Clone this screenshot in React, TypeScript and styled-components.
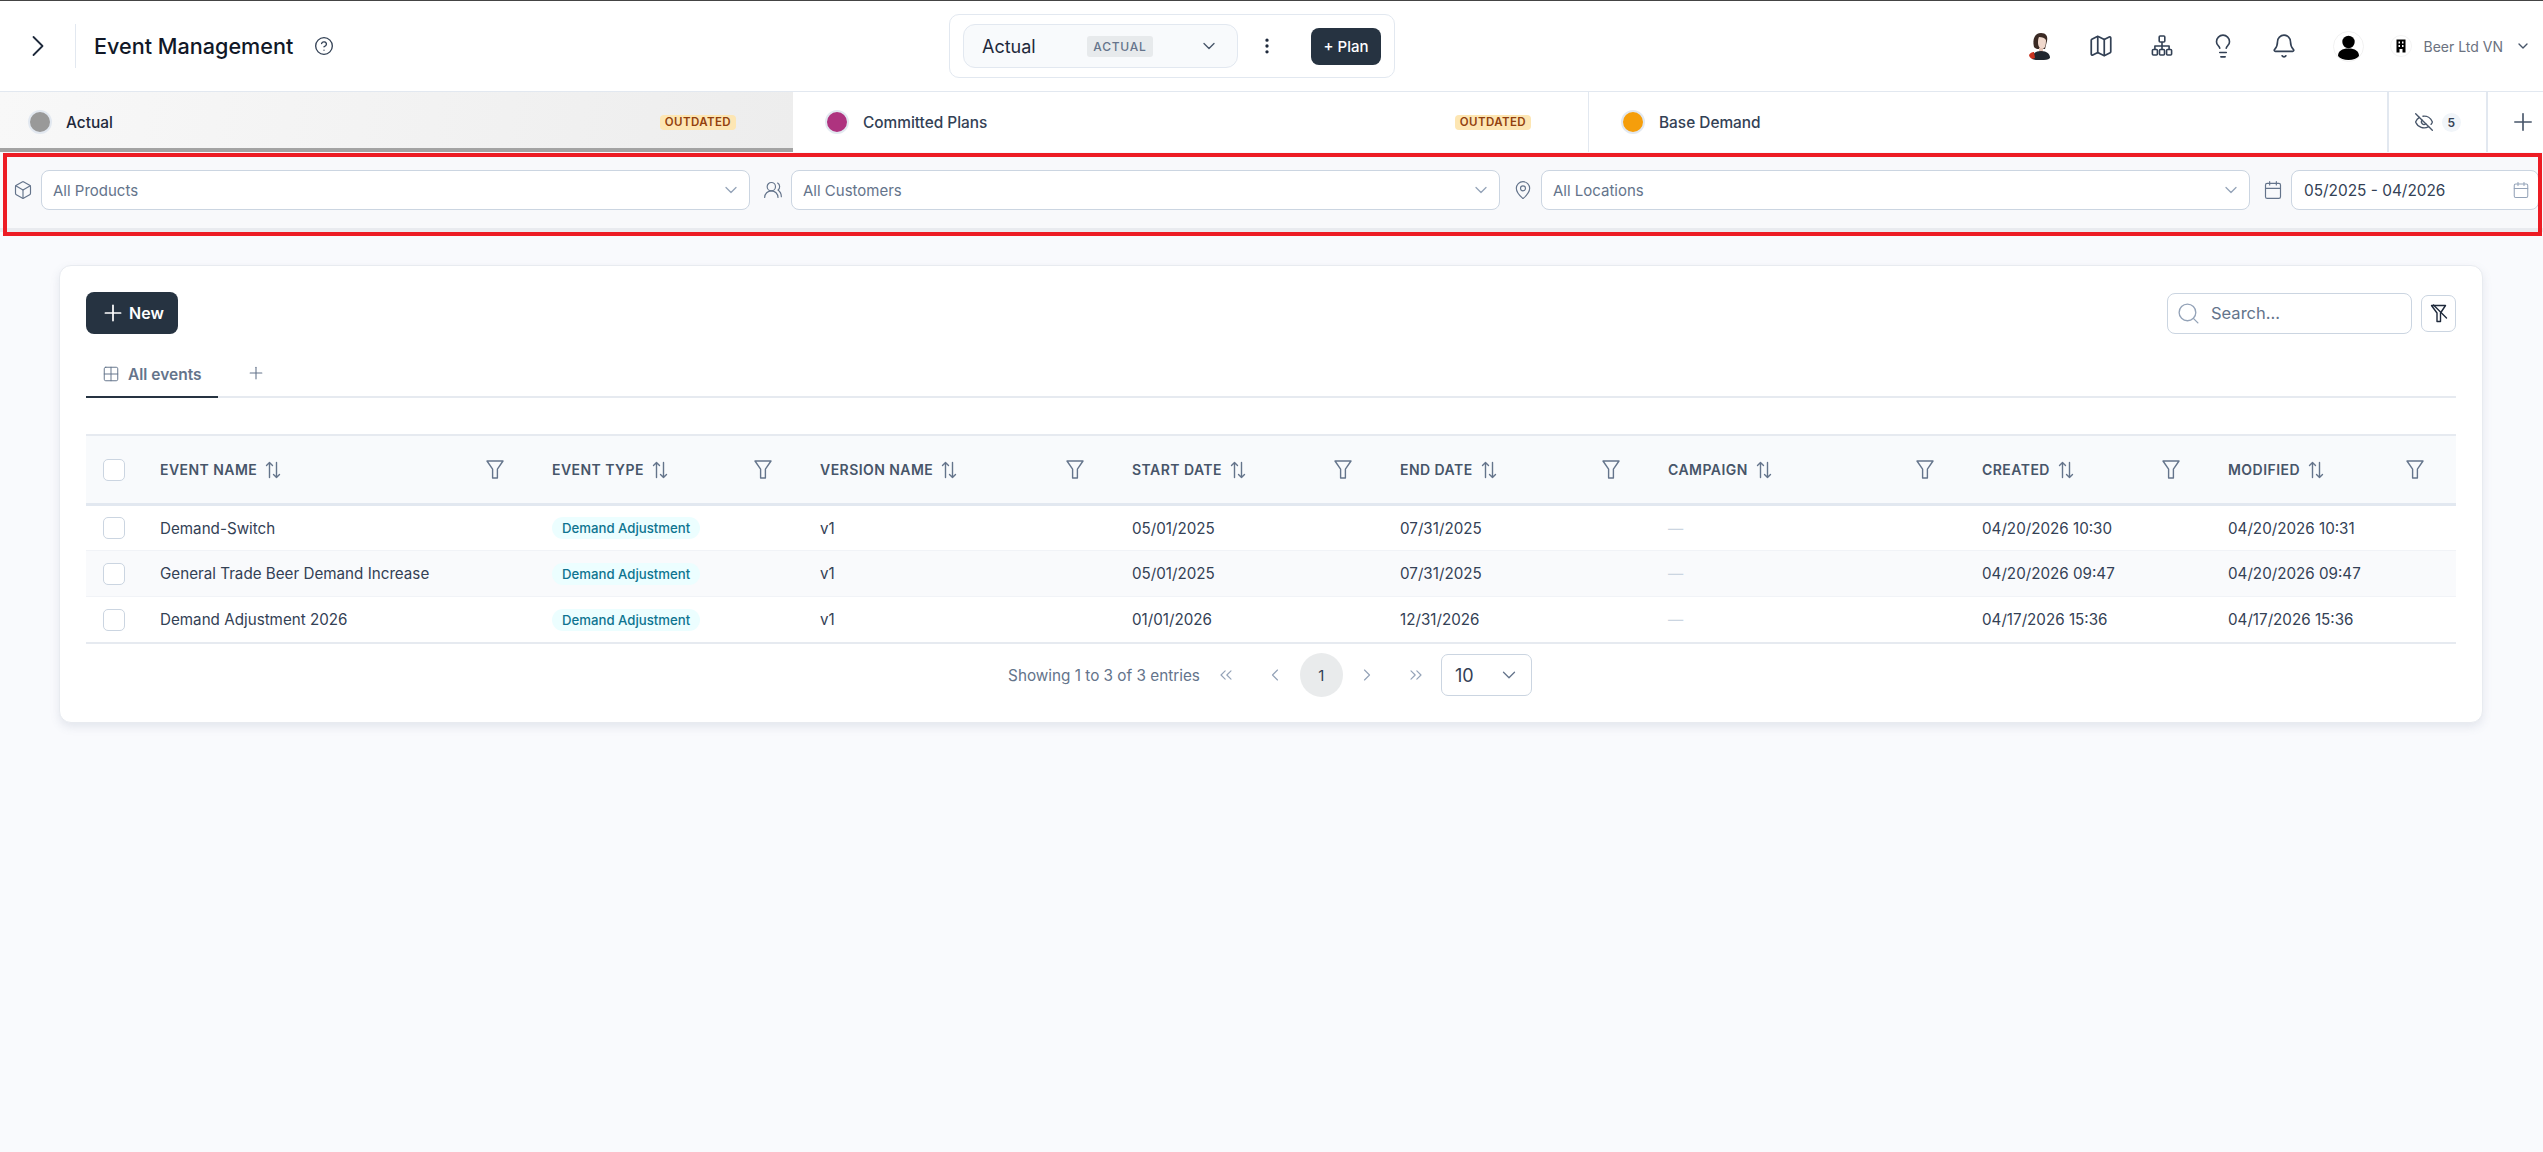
import React from 'react';
import styled, { createGlobalStyle } from 'styled-components';
import {
  Bell,
  Box,
  Calendar,
  ChevronDown,
  ChevronLeft,
  ChevronRight,
  ChevronsLeft,
  ChevronsRight,
  CircleHelp,
  EllipsisVertical,
  EyeOff,
  Grid2x2,
  Lightbulb,
  Map as MapIcon,
  MapPin,
  Plus,
  Search,
  UsersRound,
} from 'lucide-react';

const GlobalStyle = createGlobalStyle`
  html, body {
    margin: 0;
    padding: 0;
    background: #f9fafd;
    font-family: 'Inter', 'Liberation Sans', sans-serif;
    color: #1e293b;
  }
  * { box-sizing: border-box; }
`;

const Page = styled.div`
  position: relative;
  width: 2543px;
  height: 1152px;
  overflow: hidden;
  background: #f9fafd;
`;

const TopBar = styled.header`
  height: 92px;
  display: grid;
  grid-template-columns: 949px auto 1fr;
  align-items: center;
  background: #fff;
  border-top: 1px solid #444;
  border-bottom: 1px solid #e2e8f0;
`;

const TitleArea = styled.div`
  display: flex;
  align-items: center;
  height: 44px;
`;

const ToggleButton = styled.div`
  width: 76px;
  height: 44px;
  display: flex;
  align-items: center;
  justify-content: center;
  border-right: 1px solid #e2e8f0;
  color: #1e293b;
`;

const PageTitle = styled.h1`
  margin: 0 0 0 18px;
  font-size: 21.6px;
  font-weight: 500;
  color: #111827;
`;

const HelpIcon = styled(CircleHelp)`
  margin-left: 21px;
  color: #334155;
`;

const PlanBox = styled.div`
  width: 446px;
  height: 64px;
  display: flex;
  align-items: center;
  padding: 0 13px;
  background: #fff;
  border: 1px solid #e2e8f0;
  border-radius: 10px;
`;

const PlanSelect = styled.div`
  width: 275px;
  height: 44px;
  display: flex;
  align-items: center;
  padding: 0 18px;
  background: #f8fafc;
  border: 1px solid #e2e8f0;
  border-radius: 12px;
  font-size: 18px;
  color: #1e293b;
`;

const PlanName = styled.span`
  width: 105px;
`;

const PlanTag = styled.span`
  width: 66px;
  height: 21px;
  display: flex;
  align-items: center;
  justify-content: center;
  background: #e7eaec;
  border-radius: 3px;
  font-size: 12px;
  font-weight: 500;
  letter-spacing: 0.8px;
  color: #64748b;
`;

const PlanChevron = styled(ChevronDown)`
  margin-left: auto;
  color: #475569;
`;

const KebabIcon = styled(EllipsisVertical)`
  margin-left: 19px;
  color: #1e293b;
`;

const PlanButton = styled.button`
  margin-left: auto;
  width: 70px;
  height: 37px;
  padding: 0;
  border: 0;
  border-radius: 8px;
  background: #263341;
  color: #fff;
  font-family: inherit;
  font-size: 15px;
  font-weight: 500;
`;

const ActionArea = styled.div`
  display: flex;
  align-items: center;
  justify-content: flex-end;
  padding-right: 12px;
`;

const ActionSlot = styled.div<{ $nudge?: number }>`
  width: 61px;
  margin-left: ${(p) => p.$nudge ?? 0}px;
  display: flex;
  justify-content: center;
  color: #334155;
`;

const LogoSlot = styled.div`
  margin-left: 11px;
  display: flex;
`;

const CompanyName = styled.span`
  margin-left: 12px;
  font-size: 14px;
  color: #6b7280;
`;

const CompanyChevron = styled(ChevronDown)`
  margin-left: 12px;
  color: #475569;
`;

const TabBar = styled.nav`
  height: 60px;
  display: grid;
  grid-template-columns: 793px 796px 797.5px 99.5px 1fr;
  background: #fff;
`;

const PlanTab = styled.div<{ $active?: boolean; $divider?: boolean }>`
  display: flex;
  align-items: center;
  padding: ${(p) => (p.$active ? '4px 57px 0 28px' : '0 57px 0 32px')};
  background: ${(p) => (p.$active ? 'linear-gradient(100deg, #f8f8f8, #ededed)' : '#fff')};
  border-bottom: ${(p) => (p.$active ? '4px solid #a3a3a3' : '0')};
  border-right: ${(p) => (p.$divider ? '1px solid #e2e8f0' : '0')};
`;

const PlanDot = styled.span<{ $color: string }>`
  width: 24px;
  height: 24px;
  flex: none;
  background: ${(p) => p.$color};
  border: 2px solid #e2e8f0;
  border-radius: 50%;
`;

const TabLabel = styled.span<{ $active?: boolean }>`
  margin-left: 14px;
  font-size: 15.4px;
  font-weight: 500;
  color: ${(p) => (p.$active ? '#1e293b' : '#334155')};
`;

const OutdatedBadge = styled.span`
  margin-left: auto;
  height: 15px;
  padding: 0 5px;
  display: flex;
  align-items: center;
  background: #fde6b3;
  border-radius: 4px;
  font-size: 11.5px;
  font-weight: 600;
  letter-spacing: 0.4px;
  color: #92400e;
`;

const IconTab = styled.div<{ $inset?: number }>`
  display: flex;
  align-items: center;
  justify-content: center;
  gap: 8px;
  padding-left: ${(p) => p.$inset ?? 0}px;
  border-left: 2px solid #e2e8f0;
  color: #475569;
`;

const CountBubble = styled.span`
  width: 19px;
  height: 19px;
  display: flex;
  align-items: center;
  justify-content: center;
  background: #f1f5f9;
  border-radius: 50%;
  font-size: 12px;
  font-weight: 600;
  color: #334155;
`;

const FilterBar = styled.section`
  height: 80px;
  display: grid;
  grid-template-columns: 1fr 1fr 1fr 276px;
  gap: 13px;
  align-items: center;
  padding: 0 4px 0 13px;
  background: #f8f9fb;
  border-bottom: 4px solid #e9ebef;
`;

const FilterGroup = styled.div`
  display: flex;
  align-items: center;
  gap: 8px;
  color: #64748b;
`;

const FilterField = styled.div`
  flex: 1;
  height: 40px;
  display: flex;
  align-items: center;
  justify-content: space-between;
  padding: 0 8px 0 11px;
  background: #fff;
  border: 1px solid #cbd5e1;
  border-radius: 8px;
  font-size: 15px;
  color: #64748b;
`;

const DateValue = styled.span`
  margin-left: 1px;
  font-size: 15.4px;
  color: #334155;
`;

const Highlight = styled.div`
  position: absolute;
  left: 3px;
  right: 1px;
  top: 153px;
  height: 83px;
  border: 4px solid #ed1c24;
  pointer-events: none;
`;

const Main = styled.main`
  padding: 33px 60px 0 59px;
`;

const Card = styled.section`
  height: 458px;
  padding: 26px 26px 0;
  background: #fff;
  border: 1px solid #e8ebf0;
  border-radius: 12px;
  box-shadow: 0 4px 10px rgba(100, 116, 139, 0.14);
`;

const CardHead = styled.div`
  display: flex;
  align-items: center;
  height: 42px;
`;

const NewButton = styled.button`
  width: 92px;
  height: 42px;
  display: flex;
  align-items: center;
  justify-content: center;
  gap: 3px;
  padding: 0;
  border: 0;
  border-radius: 8px;
  background: #263341;
  color: #fff;
  font-family: inherit;
  font-size: 16px;
  font-weight: 600;
`;

const SearchBox = styled.div`
  margin-left: auto;
  width: 245px;
  height: 41px;
  display: flex;
  align-items: center;
  gap: 10px;
  padding: 0 8px;
  border: 1px solid #cbd5e1;
  border-radius: 8px;
  font-size: 16.5px;
  color: #64748b;
`;

const SearchIcon = styled(Search)`
  color: #94a3b8;
`;

const ClearFilterButton = styled.div`
  margin-left: 9px;
  width: 35px;
  height: 37px;
  display: flex;
  align-items: center;
  justify-content: center;
  border: 1px solid #cbd5e1;
  border-radius: 7px;
  color: #1e293b;
`;

const ViewTabs = styled.div`
  height: 65px;
  margin-top: -1px;
  display: flex;
  align-items: flex-end;
  border-bottom: 2px solid #e6eaf0;
`;

const ViewTab = styled.div`
  width: 132px;
  height: 43px;
  margin-bottom: -2px;
  display: flex;
  align-items: flex-start;
  gap: 8px;
  padding: 10px 0 0 16px;
  border-bottom: 2px solid #263341;
  font-size: 15.5px;
  font-weight: 600;
  color: #64748b;
`;

const AddViewIcon = styled(Plus)`
  margin: 0 0 13px 28px;
  color: #64748b;
`;

const gridColumns = '58px 392px 268px 312px 268px 268px 314px 246px 244px';

const TableHead = styled.div`
  margin-top: 36px;
  height: 72px;
  display: grid;
  grid-template-columns: ${gridColumns};
  align-items: center;
  background: #f8fafc;
  border-top: 2px solid #e6eaf0;
  border-bottom: 3px solid #e2e8f0;
`;

const HeadCell = styled.div`
  display: flex;
  align-items: center;
  padding: 0 32px 0 16px;
  font-size: 14px;
  font-weight: 600;
  letter-spacing: 0.45px;
  color: #475569;
`;

const SortGlyph = styled.svg`
  margin-left: 8px;
  color: #64748b;
`;

const FilterGlyph = styled.svg`
  margin-left: auto;
  color: #64748b;
`;

const CheckCell = styled.div`
  display: flex;
  justify-content: center;
  padding-right: 2px;
`;

const CheckBox = styled.span`
  width: 22px;
  height: 22px;
  background: #fff;
  border: 1px solid #cbd5e1;
  border-radius: 5px;
`;

const Row = styled.div<{ $height: number; $striped?: boolean; $last?: boolean }>`
  height: ${(p) => p.$height}px;
  display: grid;
  grid-template-columns: ${gridColumns};
  align-items: center;
  background: ${(p) => (p.$striped ? '#f9fafc' : '#fff')};
  border-bottom: ${(p) => (p.$last ? '2px solid #e6eaf0' : '1px solid #f1f3f7')};
`;

const Cell = styled.div`
  padding-left: 16px;
  font-size: 15.2px;
  color: #334155;
`;

const EmptyDash = styled.span`
  color: #cbd5e1;
`;

const TypeBadge = styled.span`
  display: inline-flex;
  align-items: center;
  height: 22px;
  padding: 0 10px;
  background: #ecfeff;
  border-radius: 11px;
  font-size: 13.2px;
  font-weight: 500;
  color: #0e7490;
`;

const Pager = styled.div`
  height: 62px;
  display: flex;
  align-items: center;
  justify-content: center;
  padding-right: 2px;
  color: #94a3b8;
`;

const PagerText = styled.span`
  margin-right: 2px;
  font-size: 15.3px;
  color: #64748b;
`;

const PagerArrow = styled.span`
  width: 49px;
  display: flex;
  justify-content: center;
`;

const PagerCurrent = styled.span`
  width: 43px;
  height: 44px;
  display: flex;
  align-items: center;
  justify-content: center;
  background: #e9ebec;
  border-radius: 50%;
  font-size: 15px;
  color: #334155;
`;

const PageSize = styled.div`
  width: 91px;
  height: 42px;
  display: flex;
  align-items: center;
  justify-content: space-between;
  padding: 0 11px 0 13px;
  background: #fff;
  border: 1px solid #cbd5e1;
  border-radius: 7px;
  font-size: 18px;
  color: #334155;
`;

const PageSizeChevron = styled(ChevronDown)`
  color: #64748b;
`;

const columns = ['EVENT NAME', 'EVENT TYPE', 'VERSION NAME', 'START DATE', 'END DATE', 'CAMPAIGN', 'CREATED', 'MODIFIED'];

const rowHeights = [45, 46, 47];

const events = [
  { name: 'Demand-Switch', start: '05/01/2025', end: '07/31/2025', created: '04/20/2026 10:30', modified: '04/20/2026 10:31' },
  { name: 'General Trade Beer Demand Increase', start: '05/01/2025', end: '07/31/2025', created: '04/20/2026 09:47', modified: '04/20/2026 09:47' },
  { name: 'Demand Adjustment 2026', start: '01/01/2026', end: '12/31/2026', created: '04/17/2026 15:36', modified: '04/17/2026 15:36' },
];

const SortIcon = () => (
  <SortGlyph width="16" height="20" viewBox="0 0 16 20" fill="none" stroke="currentColor" strokeWidth="1.4" strokeLinecap="round" strokeLinejoin="round">
    <path d="M4.5 17.5V2.5M1.5 5.5l3-3 3 3" />
    <path d="M11.5 2.5v15M8.5 14.5l3 3 3-3" />
  </SortGlyph>
);

const FunnelIcon = () => (
  <FilterGlyph width="18" height="19" viewBox="0 0 18 19" fill="none" stroke="currentColor" strokeWidth="1.4" strokeLinejoin="round">
    <path d="M1 1h16l-5.6 8.2v8.8H6.6V9.2L1 1z" />
  </FilterGlyph>
);

const FunnelSlashIcon = () => (
  <svg width="18" height="19" viewBox="0 0 18 19" fill="none" stroke="currentColor" strokeWidth="1.4" strokeLinejoin="round">
    <path d="M1.5 1.5h14l-5 7.5v8.5H7V9L1.5 1.5z" />
    <path d="M3.5 1l13 13" strokeLinecap="round" />
  </svg>
);

const SitemapIcon = () => (
  <svg width="22" height="24" viewBox="0 0 22 24" fill="none" stroke="currentColor" strokeWidth="1.6" strokeLinejoin="round">
    <rect x="8.2" y="2" width="5.6" height="6" rx="1" />
    <rect x="1.4" y="15.5" width="5" height="5.5" rx="1" />
    <rect x="8.5" y="15.5" width="5" height="5.5" rx="1" />
    <rect x="15.6" y="15.5" width="5" height="5.5" rx="1" />
    <path d="M11 8v7.5M3.9 15.5V12h14.2v3.5" />
  </svg>
);

// small cartoon portrait next to the toolbar icons
const PortraitIcon = () => (
  <svg width="22" height="28" viewBox="0 0 22 28">
    <path d="M5 15C3 7 6 1 12 1c5 0 7 3 6 8l-2 8H8l-2-1z" fill="#3a2a24" />
    <path d="M10 5c3 0 6 1 7 3 0 5-1 9-4 9-2 0-4-3-4-6 0-2 0-4 1-6z" fill="#f0d8cc" />
    <path d="M10 16h4v4h-4z" fill="#e4c4b6" />
    <path d="M3 27c0-5 3-8 9-8s9 3 9 7c-2 2-5 2-9 2s-7 0-9-1z" fill="#20262e" />
    <path d="M0 23c1-2 3-3 5-3l1 6-3 1c-1-1-3-2-3-4z" fill="#c8321f" />
  </svg>
);

const UserAvatar = () => (
  <svg width="31" height="31" viewBox="0 0 31 31">
    <circle cx="15.5" cy="15.5" r="15" fill="#fff" stroke="#f1f1f1" />
    <circle cx="15.5" cy="11" r="6.2" fill="#000" />
    <path d="M5 25c0-5 4-7.5 10.5-7.5S26 20 26 25c-2 2.5-6 4-10.5 4S7 27.5 5 25z" fill="#000" />
  </svg>
);

const CompanyLogo = () => (
  <svg width="22" height="22" viewBox="0 0 22 22">
    <circle cx="11" cy="11" r="10.5" fill="#fff" stroke="#f3f3f3" />
    <path d="M6.5 4.5h9v13h-3V14h-3v3.5h-3z" fill="#000" />
    <path d="M8.5 6.5H10v2H8.5zM12 6.500h1.500v2H12zM8.500 10H10v2H8.500zM12 10h1.500v2H12z" fill="#fff" />
  </svg>
);

const App: React.FC = () => {
  return (
    <Page>
      <GlobalStyle />
      <TopBar>
        <TitleArea>
          <ToggleButton>
            <ChevronRight size={36} strokeWidth={1.2} />
          </ToggleButton>
          <PageTitle>Event Management</PageTitle>
          <HelpIcon size={20} strokeWidth={1.6} />
        </TitleArea>
        <PlanBox>
          <PlanSelect>
            <PlanName>Actual</PlanName>
            <PlanTag>ACTUAL</PlanTag>
            <PlanChevron size={20} strokeWidth={1.6} />
          </PlanSelect>
          <KebabIcon size={20} strokeWidth={2} />
          <PlanButton>+ Plan</PlanButton>
        </PlanBox>
        <ActionArea>
          <ActionSlot><PortraitIcon /></ActionSlot>
          <ActionSlot><MapIcon size={26} strokeWidth={1.6} /></ActionSlot>
          <ActionSlot><SitemapIcon /></ActionSlot>
          <ActionSlot><Lightbulb size={26} strokeWidth={1.5} /></ActionSlot>
          <ActionSlot><Bell size={26} strokeWidth={1.5} /></ActionSlot>
          <ActionSlot $nudge={3}><UserAvatar /></ActionSlot>
          <LogoSlot><CompanyLogo /></LogoSlot>
          <CompanyName>Beer Ltd VN</CompanyName>
          <CompanyChevron size={16} strokeWidth={2} />
        </ActionArea>
      </TopBar>

      <TabBar>
        <PlanTab $active>
          <PlanDot $color="#999999" />
          <TabLabel $active>Actual</TabLabel>
          <OutdatedBadge>OUTDATED</OutdatedBadge>
        </PlanTab>
        <PlanTab $divider>
          <PlanDot $color="#ae337f" />
          <TabLabel>Committed Plans</TabLabel>
          <OutdatedBadge>OUTDATED</OutdatedBadge>
        </PlanTab>
        <PlanTab>
          <PlanDot $color="#f59e0b" />
          <TabLabel>Base Demand</TabLabel>
        </PlanTab>
        <IconTab>
          <EyeOff size={20} strokeWidth={1.6} />
          <CountBubble>5</CountBubble>
        </IconTab>
        <IconTab $inset={14}>
          <Plus size={28} strokeWidth={1.4} />
        </IconTab>
      </TabBar>

      <FilterBar>
        <FilterGroup>
          <Box size={20} strokeWidth={1.4} />
          <FilterField>
            All Products
            <ChevronDown size={20} strokeWidth={1.5} color="#94a3b8" />
          </FilterField>
        </FilterGroup>
        <FilterGroup>
          <UsersRound size={20} strokeWidth={1.4} />
          <FilterField>
            All Customers
            <ChevronDown size={20} strokeWidth={1.5} color="#94a3b8" />
          </FilterField>
        </FilterGroup>
        <FilterGroup>
          <MapPin size={20} strokeWidth={1.4} />
          <FilterField>
            All Locations
            <ChevronDown size={20} strokeWidth={1.5} color="#94a3b8" />
          </FilterField>
        </FilterGroup>
        <FilterGroup>
          <Calendar size={20} strokeWidth={1.4} />
          <FilterField>
            <DateValue>05/2025 - 04/2026</DateValue>
            <Calendar size={18} strokeWidth={1.4} color="#94a3b8" />
          </FilterField>
        </FilterGroup>
      </FilterBar>
      <Highlight />

      <Main>
        <Card>
          <CardHead>
            <NewButton>
              <Plus size={26} strokeWidth={1.6} />
              New
            </NewButton>
            <SearchBox>
              <SearchIcon size={25} strokeWidth={1.3} />
              Search...
            </SearchBox>
            <ClearFilterButton>
              <FunnelSlashIcon />
            </ClearFilterButton>
          </CardHead>

          <ViewTabs>
            <ViewTab>
              <Grid2x2 size={18} strokeWidth={1.3} />
              All events
            </ViewTab>
            <AddViewIcon size={20} strokeWidth={1.3} />
          </ViewTabs>

          <TableHead>
            <CheckCell><CheckBox /></CheckCell>
            {columns.map((label) => (
              <HeadCell key={label}>
                {label}
                <SortIcon />
                <FunnelIcon />
              </HeadCell>
            ))}
          </TableHead>

          {events.map((ev, i) => (
            <Row key={ev.name} $height={rowHeights[i]} $striped={i === 1} $last={i === events.length - 1}>
              <CheckCell><CheckBox /></CheckCell>
              <Cell>{ev.name}</Cell>
              <Cell><TypeBadge>Demand Adjustment</TypeBadge></Cell>
              <Cell>v1</Cell>
              <Cell>{ev.start}</Cell>
              <Cell>{ev.end}</Cell>
              <Cell><EmptyDash>—</EmptyDash></Cell>
              <Cell>{ev.created}</Cell>
              <Cell>{ev.modified}</Cell>
            </Row>
          ))}

          <Pager>
            <PagerText>Showing 1 to 3 of 3 entries</PagerText>
            <PagerArrow><ChevronsLeft size={20} strokeWidth={1.4} /></PagerArrow>
            <PagerArrow><ChevronLeft size={20} strokeWidth={1.4} /></PagerArrow>
            <PagerCurrent>1</PagerCurrent>
            <PagerArrow><ChevronRight size={20} strokeWidth={1.4} /></PagerArrow>
            <PagerArrow><ChevronsRight size={20} strokeWidth={1.4} /></PagerArrow>
            <PageSize>
              10
              <PageSizeChevron size={22} strokeWidth={1.4} />
            </PageSize>
          </Pager>
        </Card>
      </Main>
    </Page>
  );
};

export default App;
